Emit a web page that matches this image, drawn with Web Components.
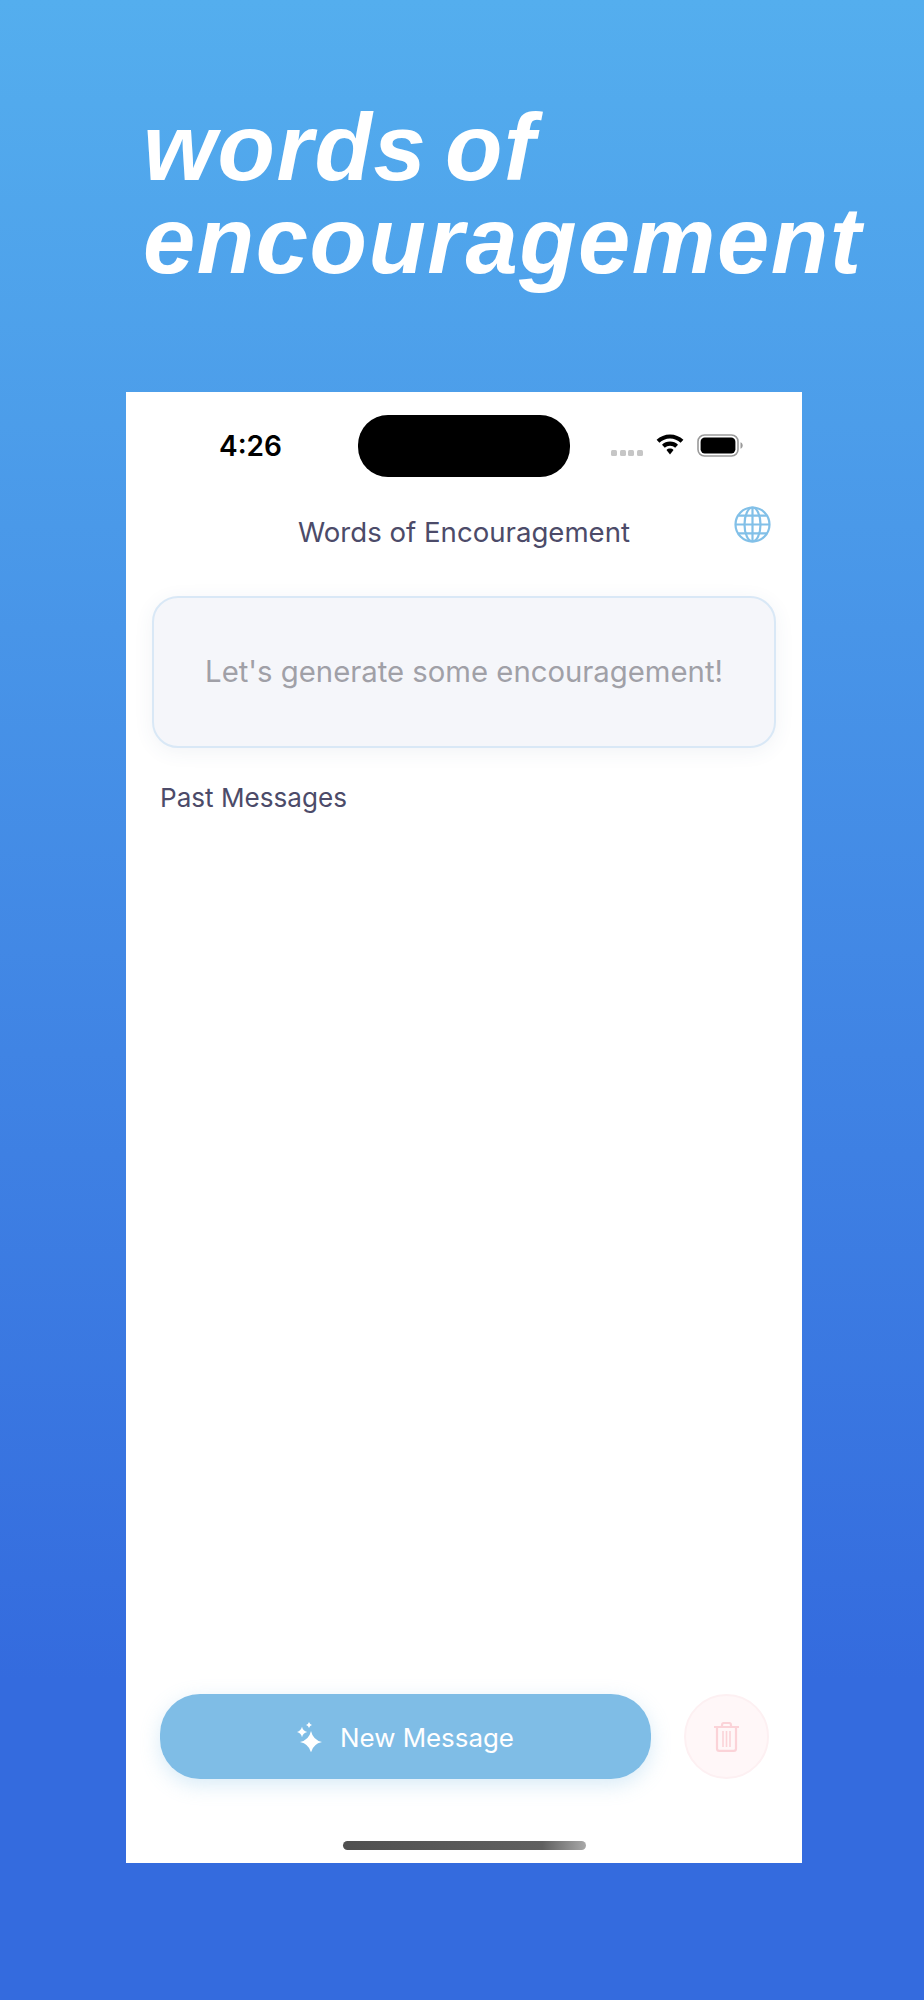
<!DOCTYPE html>
<html lang="en">
<head>
<meta charset="utf-8">
<title>words of encouragement</title>
<style>
	html, body { margin: 0; padding: 0; }
</style>
</head>
<body>
<promo-page>
	<span slot="headline">words of<br>encouragement</span>
	<phone-screen>
		<status-bar time="4:26"></status-bar>
		<app-nav>Words of Encouragement</app-nav>
		<message-card>Let's generate some encouragement!</message-card>
		<section-label>Past Messages</section-label>
		<action-bar>New Message</action-bar>
		<home-bar></home-bar>
	</phone-screen>
</promo-page>

<script>
// Small helper so every element just declares its own shadow markup
class ShadowEl extends HTMLElement {
	constructor() {
		super();
		this.attachShadow({ mode: "open" });
	}

	connectedCallback() {
		this.shadowRoot.innerHTML = this.markup();
	}
}

customElements.define("promo-page", class extends ShadowEl {
	markup() {
		return `
			<style>
				:host {
					display: block;
					width: 924px;
					height: 2000px;
					background: linear-gradient(180deg, #54aeee 0%, #346bde 84%, #346bde 100%);
					overflow: hidden;
				}
				h1 {
					margin: 0 0 105px;
					padding: 101px 0 0 143px;
					font: italic bold 94px/93px "Liberation Sans", Arial, sans-serif;
					letter-spacing: 1.5px;
					word-spacing: -10px;
					color: #fff;
					white-space: nowrap;
				}
				.stage { padding-left: 126px; }
			</style>
			<h1><slot name="headline"></slot></h1>
			<div class="stage"><slot></slot></div>
		`;
	}
});

customElements.define("phone-screen", class extends ShadowEl {
	markup() {
		return `
			<style>
				:host {
					display: flex;
					flex-direction: column;
					box-sizing: border-box;
					width: 676px;
					height: 1471px;
					padding-top: 1px;
					background: #fff;
					font-family: Inter, "Liberation Sans", sans-serif;
				}
			</style>
			<slot></slot>
		`;
	}
});

customElements.define("status-bar", class extends ShadowEl {
	markup() {
		const time = this.getAttribute("time") || "";
		return `
			<style>
				:host {
					display: grid;
					grid-template-columns: 232px 212px 1fr;
					padding-top: 22px;
					height: 62px;
				}
				.time {
					padding: 13px 0 0 93px;
					font: 600 28px/36px Inter, sans-serif;
					color: #000;
				}
				.island { background: #000; border-radius: 30px; }
				.icons {
					display: flex;
					align-items: flex-start;
					padding: 19px 0 0 41px;
				}
				.dots { display: flex; gap: 2.5px; margin: 16px 13px 0 0; }
				.dots i { width: 6px; height: 6px; border-radius: 1.5px; background: #c6c6c6; }
				.wifi { margin-right: 13px; }
			</style>
			<div class="time">${time}</div>
			<div class="island"></div>
			<div class="icons">
				<div class="dots"><i></i><i></i><i></i><i></i></div>
				<svg class="wifi" width="28" height="21" viewBox="0 0 28 21">
					<path d="M14 0.5C8.9 0.5 4.2 2.5 0.6 5.8L3.4 8.8C6.2 6.2 9.9 4.6 14 4.6s7.8 1.6 10.6 4.2l2.8-3C23.8 2.5 19.1 0.5 14 0.5z"/>
					<path d="M14 7.6c-3.1 0-5.9 1.2-8 3.2l2.8 3c1.4-1.3 3.2-2.1 5.2-2.1s3.8 .8 5.2 2.1l2.8-3c-2.1-2-4.9-3.2-8-3.2z"/>
					<path d="M14 14.6c-1.4 0-2.6 .5-3.5 1.4L14 20.6l3.5-4.6c-.9-.9-2.1-1.4-3.5-1.4z"/>
				</svg>
				<svg width="46" height="23" viewBox="0 0 46 23">
					<rect x="1" y="1" width="40" height="21" rx="6.5" fill="#fff" stroke="#9a9a9a" stroke-width="1.6"/>
					<rect x="3.6" y="3.6" width="34.8" height="15.8" rx="4.2" fill="#000"/>
					<path d="M43.5 8.2c1.4.5 2.2 1.8 2.2 3.3s-.8 2.8-2.2 3.3z" fill="#9a9a9a"/>
				</svg>
			</div>
		`;
	}
});

customElements.define("app-nav", class extends ShadowEl {
	markup() {
		return `
			<style>
				:host {
					display: grid;
					grid-template-columns: 1fr auto 1fr;
					padding: 29px 31px 0;
					height: 90px;
					box-sizing: border-box;
				}
				.title {
					grid-column: 2;
					padding-top: 8px;
					font: 400 27.6px/36px Inter, sans-serif;
					color: #4c4b69;
					white-space: nowrap;
				}
				svg { grid-column: 3; justify-self: end; }
			</style>
			<div class="title"><slot></slot></div>
			<svg width="37" height="37" viewBox="0 0 37 37" fill="none" stroke="#82c0e8" stroke-width="2.2">
				<circle cx="18.5" cy="18.5" r="17"/>
				<ellipse cx="18.5" cy="18.5" rx="8" ry="17"/>
				<path d="M18.5 1.5v34M1.500 18.5h34M4.200 9.600h28.600M4.200 27.400h28.600"/>
			</svg>
		`;
	}
});

customElements.define("message-card", class extends ShadowEl {
	markup() {
		return `
			<style>
				:host {
					display: flex;
					align-items: center;
					justify-content: center;
					box-sizing: border-box;
					margin: 29px 26px 0;
					height: 152px;
					background: #f5f6fa;
					border: 2px solid #d9e8f6;
					border-radius: 26px;
					box-shadow: 0 4px 20px rgba(60, 90, 130, 0.07);
					font: 400 29.3px/36px Inter, sans-serif;
					color: #a0a0a7;
				}
			</style>
			<slot></slot>
		`;
	}
});

customElements.define("section-label", class extends ShadowEl {
	markup() {
		return `
			<style>
				:host {
					display: block;
					margin: 33px 0 0 34px;
					font: 400 26.1px/34px Inter, sans-serif;
					color: #4c4b69;
				}
			</style>
			<slot></slot>
		`;
	}
});

customElements.define("action-bar", class extends ShadowEl {
	markup() {
		return `
			<style>
				:host {
					display: flex;
					gap: 33px;
					margin: auto 33px 62px 34px;
				}
				.primary {
					flex: 1;
					display: flex;
					align-items: center;
					justify-content: center;
					gap: 18px;
					height: 85px;
					border-radius: 40px;
					background: #7fbde6;
					box-shadow: 0 6px 20px rgba(127, 189, 230, 0.3);
					font: 400 25.9px/34px Inter, sans-serif;
					color: #fff;
				}
				.primary span { padding-top: 3px; }
				.primary svg { margin-top: 1px; }
				.trash {
					display: flex;
					align-items: center;
					justify-content: center;
					box-sizing: border-box;
					width: 85px;
					height: 85px;
					border-radius: 50%;
					background: #fff7f8;
					border: 2px solid #fdf0f2;
				}
			</style>
			<div class="primary">
				<svg width="25" height="30" viewBox="0 0 25 30" fill="#fff">
					<path d="M14 9Q16 18 25 20Q16 22 14 30.500Q12 22 3 20Q12 18 14 9z"/>
					<path d="M5 4.800Q6 9 10.200 10Q6 11 5 15.200Q4 11-.2 10Q4 9 5 4.800z"/>
					<path d="M12 0Q12.700 2.300 15 3Q12.700 3.700 12 6Q11.300 3.700 9 3Q11.300 2.300 12 0z"/>
				</svg>
				<span><slot></slot></span>
			</div>
			<div class="trash">
				<svg width="27" height="30" viewBox="0 0 27 30" fill="none" stroke="#fbd3d8" stroke-width="2.200">
					<path d="M1 5h25M9 5V3c0-1.200.8-2 2-2h5c1.200 0 2 .8 2 2v2"/>
					<path d="M4 5v21.500c0 1.400 1 2.400 2.400 2.400h14.200c1.400 0 2.400-1 2.400-2.400V5"/>
					<path d="M10 9v16M13.500 9v16M17 9v16" stroke-width="1.600"/>
				</svg>
			</div>
		`;
	}
});

customElements.define("home-bar", class extends ShadowEl {
	markup() {
		return `
			<style>
				:host {
					display: block;
					align-self: center;
					width: 243px;
					height: 9px;
					margin-bottom: 13px;
					border-radius: 5px;
					background: linear-gradient(90deg, #505050 0%, #606060 82%, #a8a8a8 100%);
				}
			</style>
		`;
	}
});
</script>
</body>
</html>
